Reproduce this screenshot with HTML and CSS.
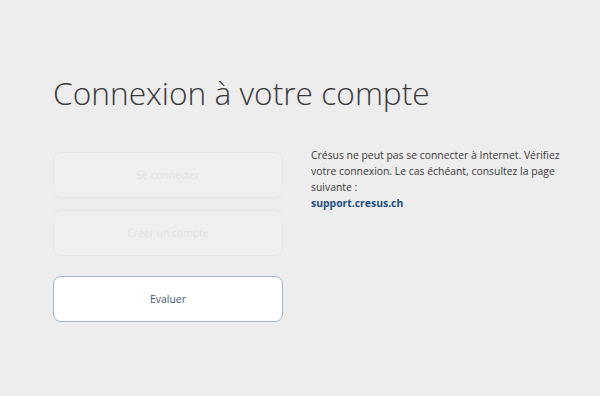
FILE: index.html
```html
<!DOCTYPE html>
<html lang="fr">
  <head>
    <meta charset="UTF-8" />
    <title>Connexion</title>
    <link rel="stylesheet" href="styles.css">
  </head>
  <body>
    <div class="page">
      <h1 class="title">Connexion à votre compte</h1>
      <div class="content">
        <!-- Boutons -->
        <div class="actions">
          <button class="btn disabled">Se connecter</button>
          <button class="btn disabled">Créer un compte</button>
          <button class="btn primary">Evaluer</button>
        </div>
        <!-- Message -->
        <div class="message">
          Crésus ne peut pas se connecter à Internet. Vérifiez votre connexion. Le cas échéant, consultez la page suivante :<br />
          <a href="#" class="link">support.cresus.ch</a>
        </div>
      </div>
    </div>
  </body>
</html>
```

FILE: styles.css
```css
html,
body {
  margin: 0;
  height: 100%;
}
body {
  background: #ededed;
  font-family: 'Open Sans', sans-serif;
  color: #444;
}
.page {
  padding: 71px 0 0 53px;
}
.title {
  margin: 0;
  font-weight: 300;
  font-size: 31.7px;
  line-height: 44px;
  color: #3a3a3a;
}
.content {
  display: flex;
  gap: 28px;
  margin-top: 37px;
}
.actions {
  display: flex;
  flex-direction: column;
  gap: 12px;
  width: 230px;
}
.btn {
  height: 46px;
  border-radius: 8px;
  font-family: 'Open Sans', sans-serif;
  font-size: 10.4px;
  padding: 0;
}
.disabled {
  background: #efefef;
  border: 1px solid #e6e6e6;
  color: #e0e0e0;
}
.primary {
  margin-top: 8px;
  background: #fff;
  border: 1px solid #9fb6cc;
  color: #3f5a78;
}
.message {
  width: 262px;
  font-size: 10.4px;
  line-height: 16px;
  color: #3a3a3a;
  margin-top: -5px;
}
.link {
  color: #1f4f7f;
  font-weight: bold;
  text-decoration: none;
}
```
